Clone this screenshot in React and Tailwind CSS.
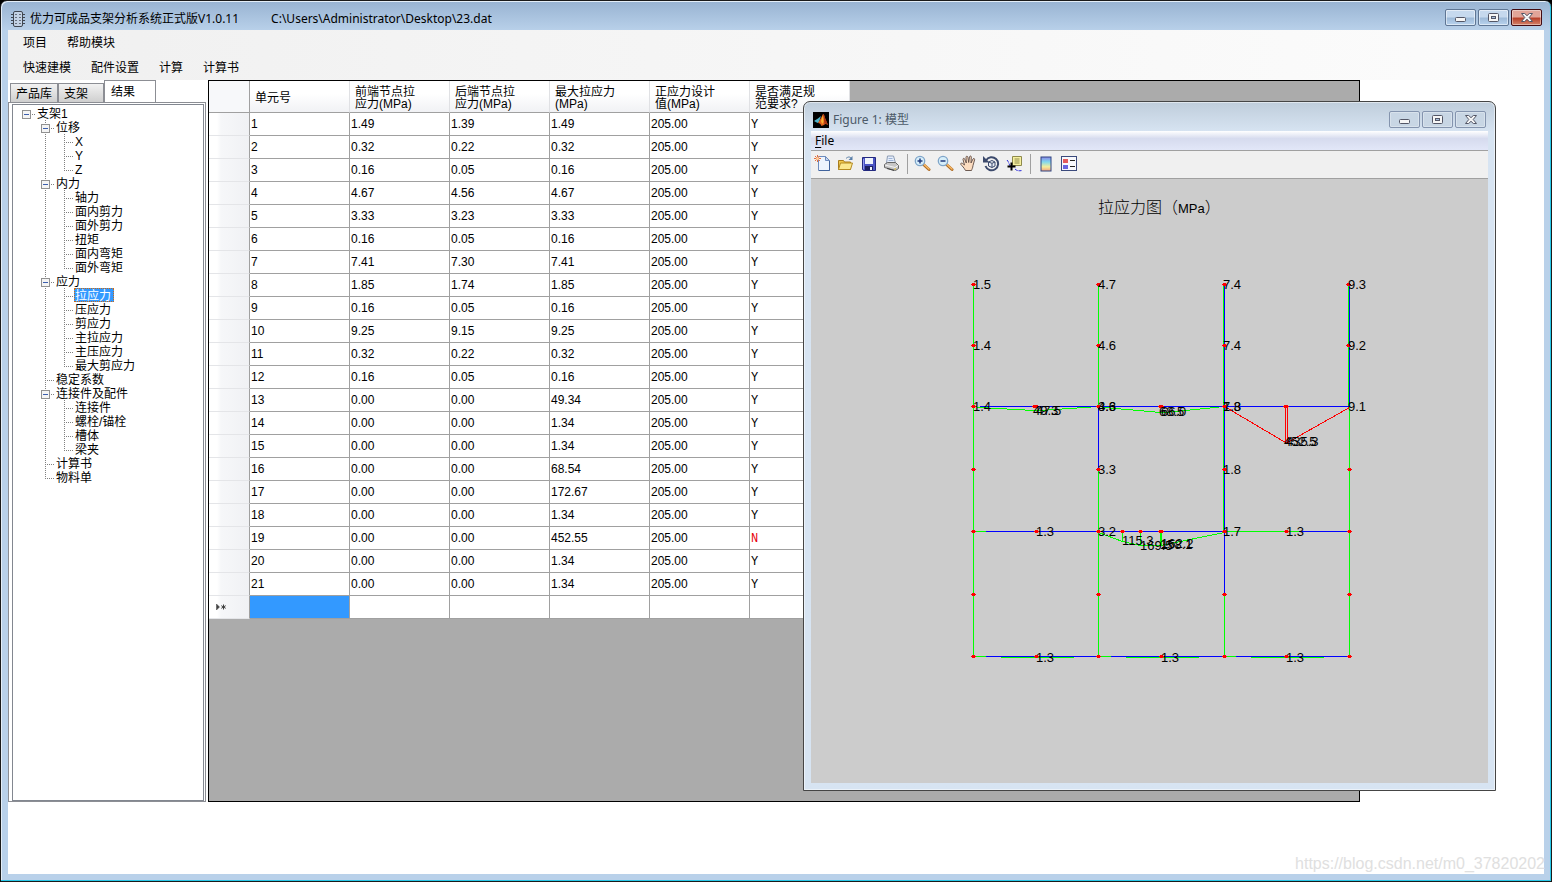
import { useState } from 'react'

const TREE = [
  { label: '支架1', depth: 0, open: true },
  { label: '位移', depth: 1, open: true },
  { label: 'X', depth: 2 },
  { label: 'Y', depth: 2 },
  { label: 'Z', depth: 2, last: true },
  { label: '内力', depth: 1, open: true },
  { label: '轴力', depth: 2 },
  { label: '面内剪力', depth: 2 },
  { label: '面外剪力', depth: 2 },
  { label: '扭矩', depth: 2 },
  { label: '面内弯矩', depth: 2 },
  { label: '面外弯矩', depth: 2, last: true },
  { label: '应力', depth: 1, open: true },
  { label: '拉应力', depth: 2 },
  { label: '压应力', depth: 2 },
  { label: '剪应力', depth: 2 },
  { label: '主拉应力', depth: 2 },
  { label: '主压应力', depth: 2 },
  { label: '最大剪应力', depth: 2, last: true },
  { label: '稳定系数', depth: 1 },
  { label: '连接件及配件', depth: 1, open: true },
  { label: '连接件', depth: 2 },
  { label: '螺栓/锚栓', depth: 2 },
  { label: '槽体', depth: 2 },
  { label: '梁夹', depth: 2, last: true },
  { label: '计算书', depth: 1 },
  { label: '物料单', depth: 1, last: true },
]

const COLUMNS = [
  ['单元号'],
  ['前端节点拉', '应力(MPa)'],
  ['后端节点拉', '应力(MPa)'],
  ['最大拉应力', '(MPa)'],
  ['正应力设计', '值(MPa)'],
  ['是否满足规', '范要求?'],
]

const ROWS = [
  ['1.49', '1.39', '1.49'],
  ['0.32', '0.22', '0.32'],
  ['0.16', '0.05', '0.16'],
  ['4.67', '4.56', '4.67'],
  ['3.33', '3.23', '3.33'],
  ['0.16', '0.05', '0.16'],
  ['7.41', '7.30', '7.41'],
  ['1.85', '1.74', '1.85'],
  ['0.16', '0.05', '0.16'],
  ['9.25', '9.15', '9.25'],
  ['0.32', '0.22', '0.32'],
  ['0.16', '0.05', '0.16'],
  ['0.00', '0.00', '49.34'],
  ['0.00', '0.00', '1.34'],
  ['0.00', '0.00', '1.34'],
  ['0.00', '0.00', '68.54'],
  ['0.00', '0.00', '172.67'],
  ['0.00', '0.00', '1.34'],
  ['0.00', '0.00', '452.55'],
  ['0.00', '0.00', '1.34'],
  ['0.00', '0.00', '1.34'],
]

const LIMIT = 205

// Stress diagram: [colour, points]
const G = '#00ff00'
const B = '#0000ff'
const R = '#ff0000'

const LINES = [
  [G, '973,284 973,656'],
  [G, '1098,284 1098,406'],
  [B, '1098,406 1098,469'],
  [G, '1098,469 1098,656'],
  [G, '1223,284 1223,531'],
  [B, '1224,284 1224,594'],
  [G, '1224,594 1224,656'],
  [G, '1348,284 1348,406'],
  [B, '1349,284 1349,406'],
  [G, '1349,406 1349,656'],
  [G, '973,406 980,407 1033,410 1040,410 1098,406'],
  [G, '1098,406 1104,407 1160,412 1165,412 1224,406'],
  [B, '979,406 1349,406'],
  [R, '1224,406 1285,442 1287,442 1349,407'],
  [R, '1285,406 1285,442'],
  [R, '1287,406 1287,442'],
  [G, '973,531 985,531'],
  [B, '985,531 1224,531'],
  [G, '1098,532 1122,541 1140,545 1160,545 1224,532'],
  [G, '1122,531 1122,541'],
  [G, '1140,531 1140,545'],
  [G, '1160,531 1160,545'],
  [G, '1161,531 1161,545'],
  [G, '1224,531 1298,531'],
  [B, '1298,531 1349,531'],
  [G, '973,656 985,656'],
  [B, '985,656 1098,656'],
  [G, '1000,657 1073,657'],
  [G, '1098,656 1110,656'],
  [B, '1110,656 1224,656'],
  [G, '1125,657 1198,657'],
  [G, '1224,656 1235,656'],
  [B, '1235,656 1349,656'],
  [G, '1250,657 1323,657'],
]

const NODES = [
  [973, 284], [1098, 284], [1224, 284], [1348, 284],
  [973, 345], [1098, 345], [1224, 345], [1348, 345],
  [973, 406], [1034, 406], [1036, 406], [1098, 406], [1160, 406], [1161, 406], [1224, 406], [1285, 406], [1286, 406],
  [973, 469], [1098, 469], [1224, 469], [1349, 469],
  [973, 531], [1036, 531], [1098, 531], [1122, 531], [1140, 531], [1160, 531], [1161, 531], [1224, 531], [1286, 531], [1349, 531],
  [973, 594], [1098, 594], [1224, 594], [1349, 594],
  [973, 656], [1036, 656], [1098, 656], [1161, 656], [1224, 656], [1286, 656], [1349, 656],
]

const LABELS = [
  [973, 289, '1.5'], [1098, 289, '4.7'], [1223, 289, '7.4'], [1348, 289, '9.3'],
  [973, 350, '1.4'], [1098, 350, '4.6'], [1223, 350, '7.4'], [1348, 350, '9.2'],
  [973, 411, '1.4'], [1098, 411, '4.6'], [1098, 411, '3.3'], [1223, 411, '7.3'], [1223, 411, '1.8'], [1348, 411, '9.1'],
  [1033, 415, '49.3'], [1036, 415, '47.5'],
  [1159, 416, '68.5'], [1161, 416, '66.0'],
  [1284, 446, '452.5'], [1286, 446, '435.3'],
  [1098, 474, '3.3'], [1223, 474, '1.8'],
  [1036, 536, '1.3'], [1098, 536, '3.2'], [1223, 536, '1.7'], [1286, 536, '1.3'],
  [1122, 545, '115.3'], [1140, 550, '169.5'], [1160, 549, '158.1'], [1161, 548, '162.2'],
  [1036, 662, '1.3'], [1161, 662, '1.3'], [1286, 662, '1.3'],
]

function TreeCell({ vertical, half, horizontal, box }) {
  return (
    <svg width="19" height="14" className="shrink-0" shapeRendering="crispEdges">
      {vertical && <line x1="9.5" x2="9.5" y1="0" y2={half ? 8 : 14} stroke="#808080" strokeDasharray="1 1" />}
      {horizontal && <line x1="9" x2="18" y1="8.5" y2="8.5" stroke="#808080" strokeDasharray="1 1" />}
      {box && (
        <g>
          <rect x="5.5" y="4.5" width="8" height="8" fill="#f4f4f4" stroke="#919191" />
          <line x1="7" x2="12" y1="8.5" y2="8.5" stroke="#3c5fae" />
        </g>
      )}
    </svg>
  )
}

function Tree() {
  const [selected, setSelected] = useState('拉应力')
  const lastBranch = TREE.length - 1
  return (
    <ul className="flex-1 border border-[#828790] bg-white pl-1 pt-px text-xs leading-3">
      {TREE.map((n, i) => (
        <li key={n.label} className="flex h-[14px]">
          {n.depth === 0 && <TreeCell horizontal box />}
          {n.depth === 1 && (
            <>
              <TreeCell />
              <TreeCell vertical half={i === lastBranch} horizontal box={n.open} />
            </>
          )}
          {n.depth === 2 && (
            <>
              <TreeCell />
              <TreeCell vertical />
              <TreeCell vertical half={n.last} horizontal />
            </>
          )}
          <button
            onClick={() => setSelected(n.label)}
            className={
              n.label === selected
                ? 'border border-dotted border-[#d06a10] bg-[#3399ff] pt-px pr-0.5 text-white'
                : 'border border-transparent pt-px pr-0.5'
            }
          >
            {n.label}
          </button>
        </li>
      ))}
    </ul>
  )
}

function ResultTable() {
  return (
    <table className="w-[641px] table-fixed border-separate border-spacing-0 bg-white text-left text-xs">
      <colgroup>
        <col className="w-[41px]" />
        {COLUMNS.map((c) => (
          <col key={c.join()} className="w-[100px]" />
        ))}
      </colgroup>
      <thead>
        <tr className="h-8 bg-linear-to-b from-white from-40% to-[#f0f1f4]">
          <td className="border-r border-b border-[#a0a0a0] bg-[#f7f8fa]" />
          {COLUMNS.map((lines) => (
            <th
              key={lines.join()}
              scope="col"
              className="border-r border-b border-r-[#e0e1e4] border-b-[#a0a0a0] p-0 pt-0.5 pl-[5px] font-normal leading-3"
            >
              {lines.map((l) => (
                <div key={l}>{l}</div>
              ))}
            </th>
          ))}
        </tr>
      </thead>
      <tbody>
        {ROWS.map((r, i) => {
          const ok = Number(r[2]) <= LIMIT
          return (
            <tr key={i} className="h-[23px] leading-4 *:border-r *:border-b *:border-[#a0a0a0] *:p-0 *:pl-px">
              <td className="border-b-[#e4e5e8]! bg-linear-to-r from-white from-20% via-[#f6f7f9] via-30% to-[#f0f1f4]" />
              <td>{i + 1}</td>
              <td>{r[0]}</td>
              <td>{r[1]}</td>
              <td>{r[2]}</td>
              <td>{LIMIT.toFixed(2)}</td>
              <td className={ok ? 'pt-0.5! font-["Liberation_Mono"]' : 'pt-0.5! font-["Liberation_Mono"] text-red-600'}>
                {ok ? 'Y' : 'N'}
              </td>
            </tr>
          )
        })}
        <tr className="h-[23px] *:border-r *:border-b *:border-[#a0a0a0] *:p-0">
          <td className="border-b-[#e4e5e8]! bg-linear-to-r from-white from-20% via-[#f6f7f9] via-30% to-[#f0f1f4]">
            <svg width="12" height="8" className="ml-1.5" stroke="#404040" fill="#404040">
              <path d="M1.5 1v6l3-3z" strokeWidth="0.5" />
              <path d="M8.5 1.5v5M6.3 2.7l4.4 2.6M10.7 2.7l-4.4 2.6" />
            </svg>
          </td>
          <td className="bg-[#3399ff]" />
          <td />
          <td />
          <td />
          <td />
          <td />
        </tr>
      </tbody>
    </table>
  )
}

function WindowButtons({ active }) {
  const base = 'flex h-[17px] w-[31px] items-center justify-center rounded-[2px] border'
  const normal = active
    ? ' border-[#5f7694] bg-linear-to-b from-[#c6d9ee] from-45% via-[#9fbbd9] via-55% to-[#b9d3ee] inset-ring inset-ring-white/50'
    : ' border-[#8494ae] bg-[#c8d6e4] inset-ring inset-ring-white/30'
  const close = active
    ? ' border-[#430b12] bg-linear-to-b from-[#e2a498] from-45% via-[#b8402a] via-55% to-[#d4836b] inset-ring inset-ring-white/40'
    : normal
  const ink = { fill: '#f6f6f6', stroke: '#535666' }
  return (
    <div className="flex gap-0.5">
      <button aria-label="最小化" className={base + normal}>
        <svg width="12" height="9" {...ink}>
          <rect x="0.5" y="4.5" width="10" height="4" rx="1" />
        </svg>
      </button>
      <button aria-label="最大化" className={base + normal}>
        <svg width="11" height="9" {...ink}>
          <rect x="0.5" y="0.5" width="10" height="8" rx="1" />
          <rect x="3.5" y="3.5" width="4" height="2" fill="#a8c0dc" />
        </svg>
      </button>
      <button aria-label="关闭" className={base + close}>
        <svg width="12" height="9" {...ink}>
          <path d="M.5.5h3.2L6 2.7 8.3.5h3.2L8.2 4.5l3.3 4H8.3L6 6.3 3.7 8.5H.5l3.3-4z" />
        </svg>
      </button>
    </div>
  )
}

function MatlabLogo() {
  return (
    <svg width="16" height="16">
      <rect width="16" height="16" fill="#000" />
      <path d="M1 9l4-2.5L8 4 6 10l-1.5 1z" fill="#4fb3c9" />
      <path d="M5 11l3-5 2-4c1 0 1.5 2 2 4l3 7c-2-1.5-3-1.5-4 0l-2.500 1C7.800 12 6.500 11 5 11z" fill="#e3641c" />
      <path d="M10 2c1 0 1.500 2 2 4l3 7c-2-1.500-3-1.500-3.500-.8C11 9 10.800 5 10 2z" fill="#a93415" />
      <path d="M8 9l2-6 .6 7-1.500 2z" fill="#f9b233" />
    </svg>
  )
}

function NewIcon() {
  return (
    <svg width="17" height="17" fill="none">
      <path d="M4.500 1.500h7l4 4v10h-11z" fill="#edf4fd" stroke="#6d8bbd" />
      <path d="M15.500 6v9.500H5" stroke="#41639c" />
      <path d="M11.500 1.500v4h4z" fill="#c4d6f0" stroke="#6d8bbd" />
      <path d="M3.500 0v7M0 3.500h7M1 1l5 5M6 1L1 6" stroke="#e4703d" />
      <circle cx="3.500" cy="3.500" r="1.500" fill="#ffd0a0" />
    </svg>
  )
}

function OpenIcon() {
  return (
    <svg width="17" height="17" fill="none">
      <path d="M1.500 14.500v-9h5l1 1.500h6v7.500z" fill="#f0c84c" stroke="#a87c1c" />
      <path d="M1.500 14.500l2-6.500h12l-2 6.500z" fill="#fbe88f" stroke="#b58b22" />
      <path d="M9 3.500c2-2 4-2 5.500 0" stroke="#5a7fa8" />
      <path d="M15.500 1v4h-4z" fill="#5a7fa8" />
    </svg>
  )
}

function SaveIcon() {
  return (
    <svg width="16" height="16" fill="none">
      <path d="M1.500 1.500h13v13h-12l-1-1z" fill="#4b54c4" stroke="#23297f" />
      <rect x="4" y="2" width="8" height="6" fill="#eef3fb" />
      <rect x="4" y="10" width="8" height="4" fill="#1d2160" />
      <rect x="9" y="11" width="2" height="3" fill="#eef3fb" />
      <path d="M2.500 3v10" stroke="#8e96ee" />
    </svg>
  )
}

function PrintIcon() {
  return (
    <svg width="17" height="17" fill="none">
      <path d="M3.500 8l1-7h6l2 7z" fill="#e6eefb" stroke="#8c9cb4" />
      <path d="M5.500 3.500h4M5.500 5.500h5" stroke="#9db4d8" />
      <path d="M1.500 9.500l3-2h8l3 3v3l-3 2-11-3z" fill="#c6c6c6" stroke="#666" />
      <path d="M2 10l10 2.500 3-2" stroke="#f4f4f4" />
      <path d="M4 13.500l7 2" stroke="#444" />
      <path d="M11.500 14h1.500" stroke="#e2b400" />
    </svg>
  )
}

function ZoomIcon({ plus }) {
  return (
    <svg width="17" height="17" fill="none">
      <path d="M9.500 9.500l5.500 5" stroke="#b06c24" strokeWidth="3" strokeLinecap="round" />
      <path d="M10 9.500l5 4.500" stroke="#f7b967" strokeWidth="1.500" strokeLinecap="round" />
      <circle cx="6" cy="6" r="4.700" fill="#d6eefa" stroke="#7fa5c9" strokeWidth="1.300" />
      <path d="M3.500 6h5" stroke="#223a7c" strokeWidth="1.500" />
      {plus && <path d="M6 3.500v5" stroke="#223a7c" strokeWidth="1.500" />}
    </svg>
  )
}

function HandIcon() {
  return (
    <svg width="17" height="17" fill="none">
      <path
        d="M5.500 15.500C4 12.500 2 11 .8 9.300c-.5-1 .8-1.700 1.700-.9L4.500 10 3 4.500c-.2-1.300 1.300-1.600 1.700-.4L6.300 8 6 2.200c0-1.300 1.700-1.300 1.900 0L8.700 7.500l.8-5.700c.3-1.200 1.900-1 1.800.3L11 8l2-4c.6-1.100 2-.4 1.600.8L13 10.500c-.3 2.500-1 3.500-1.500 5z"
        fill="#fbdcc0"
        stroke="#5e4a42"
        strokeWidth="0.900"
      />
    </svg>
  )
}

function RotateIcon() {
  return (
    <svg width="17" height="17" fill="none">
      <path d="M3 5.500A6.500 6.500 0 1 1 2.500 11" stroke="#3c4a6c" strokeWidth="2" />
      <path d="M0 1v6.500h6.500z" fill="#3c4a6c" />
      <path d="M5.500 7l3.500-1.500L12 7v4l-3 1.500L5.500 11zM5.500 7L9 8.300 12 7M9 8.300v4" fill="#e8edf6" stroke="#3c4a6c" />
    </svg>
  )
}

function CursorIcon() {
  return (
    <svg width="17" height="17" fill="none">
      <path d="M1 5c2 2 2 5 4 7M9 14c2 2 4 2 7 1.500" stroke="#2b2bdc" strokeDasharray="3 1" />
      <path d="M6.500 1.500h9v9h-9z" fill="#f6f0a0" stroke="#8e8a4c" />
      <path d="M8.500 4h5M8.500 6h5M8.500 8h5" stroke="#8e8a4c" />
      <path d="M5.500 7.500v8M1.500 11.500h8" stroke="#000" strokeWidth="2" />
    </svg>
  )
}

function ColorbarIcon() {
  return (
    <svg width="12" height="16">
      <defs>
        <linearGradient id="bar" x1="0" x2="0" y1="0" y2="1">
          <stop offset="0" stopColor="#8c86e8" />
          <stop offset="0.350" stopColor="#7fd8ee" />
          <stop offset="0.700" stopColor="#f4ee9c" />
          <stop offset="1" stopColor="#f0a080" />
        </linearGradient>
      </defs>
      <rect x="1" y="1" width="10" height="14" fill="url(#bar)" stroke="#2f4480" />
    </svg>
  )
}

function LegendIcon() {
  return (
    <svg width="16" height="16" shapeRendering="crispEdges">
      <rect x="0.500" y="0.500" width="15" height="14" fill="#f8f9fd" stroke="#3b4a7c" />
      <rect x="2" y="3" width="5" height="4" fill="#e45c5c" />
      <rect x="2" y="9" width="5" height="4" fill="#6a66e0" />
      <path d="M9 4.500h5M9 10.500h5" stroke="#222" />
    </svg>
  )
}

function ToolButton({ label, children }) {
  return (
    <button aria-label={label} className="flex h-[26px] w-[23px] items-center justify-center">
      {children}
    </button>
  )
}

function Separator() {
  return (
    <div className="flex w-2 justify-center">
      <div className="h-5 w-px bg-[#a0a0a0]" />
    </div>
  )
}

function StressPlot() {
  return (
    <svg viewBox="811 179 677 604" className="block h-[604px] w-full bg-[#cccccc]">
      <text x="1098" y="213" fontSize="16" className='font-["Liberation_Sans","Noto_Sans_CJK_SC",sans-serif] font-light'>
        拉应力图（<tspan fontSize="13">MPa</tspan>）
      </text>
      <g fill="none" shapeRendering="crispEdges" transform="translate(.5 .5)">
        {LINES.map(([c, pts]) => (
          <polyline key={c + pts} points={pts} stroke={c} />
        ))}
      </g>
      <g fill={R} shapeRendering="crispEdges">
        {NODES.map(([x, y]) => (
          <path key={`${x}-${y}`} d={`M${x - 2} ${y}h1v-1h3v1h1v1h-1v1h-3v-1h-1z`} />
        ))}
      </g>
      <g fill="#000" fontSize="13">
        {LABELS.map(([x, y, t]) => (
          <text key={`${x}-${y}-${t}`} x={x} y={y}>
            {t}
          </text>
        ))}
      </g>
    </svg>
  )
}

function FigureWindow() {
  return (
    <section className='absolute top-[100px] left-[802px] w-[693px] rounded-t-[7px] border border-[#454545] bg-linear-to-b from-[#bfcddb] to-[#d7e4f2] to-[30px] px-[7px] pb-[7px] font-["Liberation_Sans","Noto_Sans_CJK_SC",sans-serif] inset-ring inset-ring-white/50'>
      <div className="flex h-[29px] items-start justify-between pr-0.5 pt-[9px]">
        <h2 className='flex items-center gap-1 pl-0.5 font-["Noto_Sans","Noto_Sans_CJK_SC",sans-serif] text-xs leading-[18px] text-[#4c5a68]'>
          <MatlabLogo />
          Figure 1: 模型
        </h2>
        <WindowButtons />
      </div>
      <nav className="flex h-5 border-b border-[#a0a0a0] bg-linear-to-b from-white via-[#d6dbee] via-40% to-[#e2e7f8]">
        <button className='px-1 font-["Noto_Sans",sans-serif] text-xs leading-[19px]'>
          <u className="underline-offset-2">F</u>ile
        </button>
      </nav>
      <div className="flex h-7 items-center border-b border-[#a0a0a0] bg-[#f0f0f0] pb-0.5">
        <ToolButton label="New"><NewIcon /></ToolButton>
        <ToolButton label="Open"><OpenIcon /></ToolButton>
        <ToolButton label="Save"><SaveIcon /></ToolButton>
        <ToolButton label="Print"><PrintIcon /></ToolButton>
        <Separator />
        <ToolButton label="Zoom In"><ZoomIcon plus /></ToolButton>
        <ToolButton label="Zoom Out"><ZoomIcon /></ToolButton>
        <ToolButton label="Pan"><HandIcon /></ToolButton>
        <ToolButton label="Rotate 3D"><RotateIcon /></ToolButton>
        <ToolButton label="Data Cursor"><CursorIcon /></ToolButton>
        <Separator />
        <ToolButton label="Colorbar"><ColorbarIcon /></ToolButton>
        <ToolButton label="Legend"><LegendIcon /></ToolButton>
      </div>
      <StressPlot />
    </section>
  )
}

function AppIcon() {
  return (
    <svg width="14" height="16" fill="none" stroke="#3f4650">
      <rect x="2.500" y="0.500" width="9" height="15" rx="1.500" fill="#c3d2e4" />
      <path d="M0 3.500h2M12 3.500h2M0 6.500h2M12 6.500h2M0 9.500h2M12 9.500h2M0 12.500h2M12 12.500h2" />
      <path d="M4 3.500h2M8 3.500h2M4 6.500h2M8 6.500h2M4 9.500h2M8 9.500h2M4 12.500h2M8 12.500h2" stroke="#66707e" />
    </svg>
  )
}

export default function App() {
  return (
    <div className="bg-black">
      <div className='relative flex min-h-screen flex-col rounded-t-[7px] border border-[#1a1a1a] bg-linear-to-b from-[#98b3d2] to-[#b9d1ea] to-[30px] px-[7px] pb-[7px] font-["Liberation_Sans","Noto_Sans_CJK_SC",sans-serif] text-black shadow-[inset_-1px_-1px_0_#28c8e8,inset_1px_1px_0_#e4eef8]'>
        <header className='flex h-[29px] items-start justify-between pr-0.5 pt-2 font-["Noto_Sans","Noto_Sans_CJK_SC",sans-serif] text-xs leading-5'>
          <div className="flex items-center">
            <span className="mr-[5px] pl-[3px]">
              <AppIcon />
            </span>
            <h1 className="mr-8">优力可成品支架分析系统正式版V1.0.11</h1>
            <span>C:\Users\Administrator\Desktop\23.dat</span>
          </div>
          <WindowButtons active />
        </header>

        <div className="bg-linear-to-r from-[#f0f0f0] to-[#fcfcfc] pl-[5px] text-xs">
          <nav className="flex h-[25px]">
            <button className="px-2.5">项目</button>
            <button className="px-2.5">帮助模块</button>
          </nav>
          <nav className="flex h-[25px]">
            <button className="px-2.5">快速建模</button>
            <button className="px-2.5">配件设置</button>
            <button className="px-2.5">计算</button>
            <button className="px-2.5">计算书</button>
          </nav>
        </div>

        <main className="flex flex-1 bg-white pr-[184px] pb-[72px]">
          <aside className="mr-0.5 flex w-[198px] flex-col">
            <div role="tablist" className="flex items-end pl-0.5 text-xs leading-[18px]">
              <button role="tab" className="h-[19px] w-12 border border-b-0 border-[#8c8e94] bg-linear-to-b from-[#f2f2f2] to-[#cfcfcf] pt-px text-center">
                产品库
              </button>
              <button role="tab" className="h-[19px] w-[46px] border border-b-0 border-[#8c8e94] bg-linear-to-b from-[#f2f2f2] to-[#cfcfcf] pt-px pl-[5px] text-left">
                支架
              </button>
              <button role="tab" aria-selected="true" className="-mb-px h-[23px] w-[52px] border border-b-0 border-[#8c8e94] bg-white pr-3.5 pb-px text-center">
                结果
              </button>
            </div>
            <div className="flex flex-1 border border-[#8c8e94] pt-px pr-px pl-[3px]">
              <Tree />
            </div>
          </aside>
          <div className="flex-1 border border-black bg-[#ababab]">
            <ResultTable />
          </div>
        </main>

        <FigureWindow />
        <p className="absolute right-1.5 bottom-[7px] text-base leading-5 text-[#e0e0e0]">https://blog.csdn.net/m0_37820202</p>
      </div>
    </div>
  )
}
